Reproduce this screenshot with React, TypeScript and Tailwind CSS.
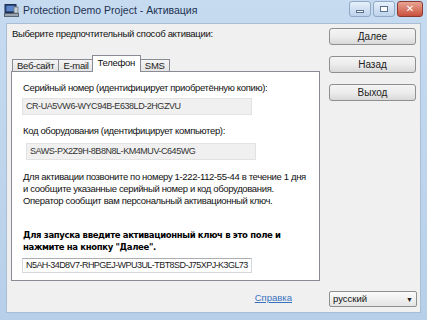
import React from 'react';

const ui = { fontFamily: '"Liberation Sans", Arial, sans-serif' };
const bold = { fontFamily: '"DejaVu Sans", Verdana, sans-serif' };

function AppIcon() {
  return (
    <svg width="15" height="13" viewBox="0 0 15 13">
      <rect x="1" y="0.5" width="11" height="8" fill="#2f4f86" stroke="#1c2d4f" />
      <rect x="2.5" y="2" width="8" height="5" fill="#5c86c9" />
      <rect x="0.5" y="9.5" width="14" height="3" fill="#9aa4b0" stroke="#5a6470" />
      <rect x="10" y="3" width="4" height="6" fill="#c9cfd6" stroke="#6d7782" strokeWidth="0.8" />
    </svg>
  );
}

function CaptionButtons() {
  return (
    <div className="flex items-start gap-[2px] pt-[1px]">
      <div className="w-[22px] h-[16px] rounded-[3px] border border-[#8fa9c6] bg-gradient-to-b from-[#e6f0fa] to-[#bcd2ea] flex items-center justify-center">
        <div className="w-[8px] h-[3px] border border-[#5a7090] bg-white mt-[5px]" />
      </div>
      <div className="w-[22px] h-[16px] rounded-[3px] border border-[#8fa9c6] bg-gradient-to-b from-[#e6f0fa] to-[#bcd2ea] flex items-center justify-center">
        <div className="w-[8px] h-[6px] border-[1.5px] border-[#5a7090] bg-white" />
      </div>
      <div className="w-[26px] h-[16px] rounded-[3px] border border-[#8b3a32] bg-gradient-to-b from-[#e8a393] to-[#c8503c] flex items-center justify-center text-white text-[10px] font-bold leading-none" style={bold}>
        ✕
      </div>
    </div>
  );
}

function Btn({ label }: { label: string }) {
  return (
    <button className="w-[87px] h-[17px] rounded-[3px] border border-[#8e8f8f] bg-gradient-to-b from-[#f4f4f4] via-[#ececec] to-[#d9d9d9] text-[10px] text-[#222] leading-none flex items-center justify-center" style={ui}>
      {label}
    </button>
  );
}

function Field({ value, readOnly }: { value: string; readOnly?: boolean }) {
  return (
    <div
      className={
        readOnly
          ? 'h-[17px] w-[230px] border border-[#e2e2e2] bg-[#f0f0f0] px-[3px] flex items-center text-[9px] tracking-[-0.45px] text-[#333] whitespace-nowrap overflow-hidden'
          : 'h-[15px] w-[230px] border border-[#d4d8dd] border-t-[#abadb3] bg-white px-[3px] flex items-center text-[9px] tracking-[-0.55px] text-[#222] whitespace-nowrap overflow-hidden'
      }
      style={ui}
    >
      {value}
    </div>
  );
}

export default function App() {
  const tabs = ['Веб-сайт', 'E-mail', 'Телефон', 'SMS'];
  return (
    <div className="w-[427px] h-[320px] bg-gradient-to-b from-[#c6dbf0] to-[#b7cfe9] flex flex-col overflow-hidden" style={ui}>
      {/* title bar */}
      <div className="h-[23px] flex items-start justify-between pl-[4px] pr-[4px]">
        <div className="flex items-center gap-[4px] pt-[4px]">
          <AppIcon />
          <span className="text-[10.5px] text-[#1e3252] leading-none">Protection Demo Project - Активация</span>
        </div>
        <CaptionButtons />
      </div>

      {/* client area */}
      <div className="flex-1 mx-[6px] mb-[7px] bg-[#f0f0f0] border border-[#a9bdd4] flex pl-[4px]">
        {/* left column */}
        <div className="w-[309px] flex flex-col">
          <div className="text-[9.5px] tracking-[-0.3px] text-[#111] leading-[12px] mt-[4px] pl-[1px] whitespace-nowrap">Выберите предпочтительный способ активации:</div>

          {/* tabs */}
          <div className="flex items-end h-[17px] mt-[15px] pl-[1px] text-[9.5px] tracking-[-0.3px]">
            {tabs.map((t) => {
              const active = t === 'Телефон';
              return (
                <div
                  key={t}
                  className={
                    active
                      ? 'h-[17px] px-[5px] border border-b-0 border-[#898c95] bg-white text-[#111] flex items-center leading-none -mx-[1px] relative z-10 pb-[2px]'
                      : 'h-[13px] px-[4px] border border-b-0 border-[#898c95] bg-gradient-to-b from-[#f4f4f4] to-[#e2e2e2] text-[#222] flex items-center leading-none -mr-[1px]'
                  }
                >
                  {t}
                </div>
              );
            })}
          </div>

          {/* tab panel */}
          <div className="h-[210px] border border-[#898c95] bg-white pl-[11px] pt-[10px] flex flex-col text-[9.5px] tracking-[-0.35px] text-[#111] -mt-[1px] whitespace-nowrap">
            <div className="leading-[12px]">Серийный номер (идентифицирует приобретённую копию):</div>
            <div className="mt-[4px] -ml-[1px]">
              <Field readOnly value="CR-UA5VW6-WYC94B-E638LD-2HGZVU" />
            </div>
            <div className="leading-[12px] mt-[10px]">Код оборудования (идентифицирует компьютер):</div>
            <div className="mt-[6px] ml-[3px]">
              <Field readOnly value="SAWS-PX2Z9H-8B8N8L-KM4MUV-C645WG" />
            </div>
            <div className="leading-[12px] mt-[11px]">
              Для активации позвоните по номеру 1-222-112-55-44 в течение 1 дня
              <br />и сообщите указанные серийный номер и код оборудования.
              <br />Оператор сообщит вам персональный активационный ключ.
            </div>
            <div className="leading-[12px] mt-[22px] font-bold text-[8.5px] tracking-[-0.35px] text-black" style={bold}>
              Для запуска введите активационный ключ в это поле и
              <br />нажмите на кнопку "Далее".
            </div>
            <div className="mt-[5px] -ml-[1px]">
              <Field value="N5AH-34D8V7-RHPGEJ-WPU3UL-TBT8SD-J75XPJ-K3GL73" />
            </div>
          </div>

          {/* footer */}
          <div className="flex justify-end pr-[28px] mt-[12px]">
            <a href="#" className="text-[9.5px] text-[#3a72c0] underline leading-none">Справка</a>
          </div>
        </div>

        {/* right column */}
        <div className="ml-[9px] flex flex-col">
          <div className="mt-[4px] flex flex-col gap-[11px]">
            <Btn label="Далее" />
            <Btn label="Назад" />
            <Btn label="Выход" />
          </div>
          <div className="mt-auto mb-[5px] w-[88px] h-[16px] border border-[#8e8f8f] rounded-[2px] bg-gradient-to-b from-[#fbfbfb] to-[#e4e4e4] flex items-center justify-between px-[3px] text-[9.5px] text-[#111]">
            <span className="leading-none">русский</span>
            <span className="text-[7px] text-[#222] leading-none">▼</span>
          </div>
        </div>
      </div>
    </div>
  );
}
